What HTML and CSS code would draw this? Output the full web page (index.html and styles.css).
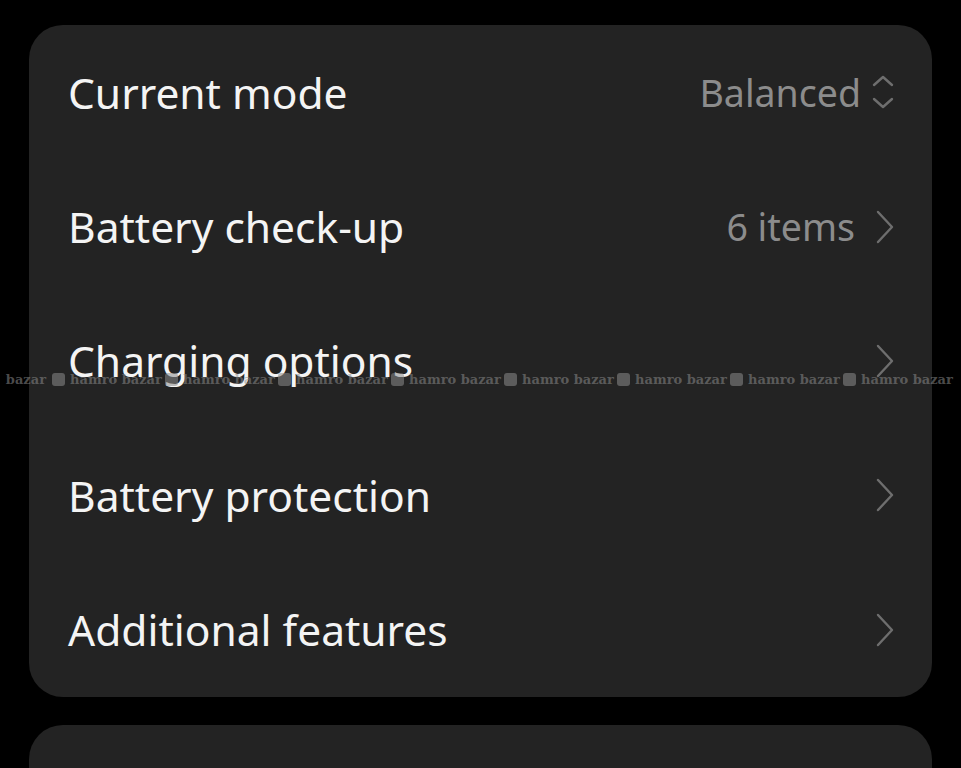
FILE: index.html
```html
<!DOCTYPE html>
<html>
<head>
<meta charset="utf-8">
<link rel="stylesheet" href="styles.css">
</head>
<body>
<div class="page">
  <section class="card">
    <div class="row">
      <span class="label">Current mode</span>
      <span class="value">Balanced
        <svg class="updown" width="22" height="34" viewBox="0 0 22 34"><path d="M2 10 L11 2 L20 10 M2 24 L11 32 L20 24" fill="none" stroke="#6e6e6e" stroke-width="2.4" stroke-linecap="round" stroke-linejoin="round"/></svg>
      </span>
    </div>
    <div class="row">
      <span class="label">Battery check-up</span>
      <span class="value">6 items
        <svg class="chev" width="18" height="34" viewBox="0 0 18 34"><path d="M2 2 L16 17 L2 32" fill="none" stroke="#6e6e6e" stroke-width="2.4" stroke-linecap="round" stroke-linejoin="round"/></svg>
      </span>
    </div>
    <div class="row">
      <span class="label">Charging options</span>
      <span class="value">
        <svg class="chev" width="18" height="34" viewBox="0 0 18 34"><path d="M2 2 L16 17 L2 32" fill="none" stroke="#6e6e6e" stroke-width="2.4" stroke-linecap="round" stroke-linejoin="round"/></svg>
      </span>
    </div>
    <div class="row">
      <span class="label">Battery protection</span>
      <span class="value">
        <svg class="chev" width="18" height="34" viewBox="0 0 18 34"><path d="M2 2 L16 17 L2 32" fill="none" stroke="#6e6e6e" stroke-width="2.4" stroke-linecap="round" stroke-linejoin="round"/></svg>
      </span>
    </div>
    <div class="row">
      <span class="label">Additional features</span>
      <span class="value">
        <svg class="chev" width="18" height="34" viewBox="0 0 18 34"><path d="M2 2 L16 17 L2 32" fill="none" stroke="#6e6e6e" stroke-width="2.4" stroke-linecap="round" stroke-linejoin="round"/></svg>
      </span>
    </div>
  </section>
  <section class="card card-next"></section>
</div>
<div class="watermark">
  <span class="wm-item wm-first">bazar</span>
  <span class="wm-item"><i class="wm-logo"></i>hamro bazar</span>
  <span class="wm-item"><i class="wm-logo"></i>hamro bazar</span>
  <span class="wm-item"><i class="wm-logo"></i>hamro bazar</span>
  <span class="wm-item"><i class="wm-logo"></i>hamro bazar</span>
  <span class="wm-item"><i class="wm-logo"></i>hamro bazar</span>
  <span class="wm-item"><i class="wm-logo"></i>hamro bazar</span>
  <span class="wm-item"><i class="wm-logo"></i>hamro bazar</span>
  <span class="wm-item"><i class="wm-logo"></i>hamro bazar</span>
</div>
</body>
</html>
```
FILE: styles.css
```css
html, body {
  margin: 0;
  padding: 0;
  background: #000;
  height: 768px;
  overflow: hidden;
}
.page {
  padding: 25px 29px 0 29px;
  display: flex;
  flex-direction: column;
  gap: 28px;
  font-family: "Noto Sans", "Open Sans", sans-serif;
}
.card {
  background: #232323;
  border-radius: 34px;
  display: flex;
  flex-direction: column;
}
.card-next {
  height: 44px;
  border-radius: 34px 34px 0 0;
}
.row {
  height: 134.4px;
  display: flex;
  align-items: center;
  justify-content: space-between;
  padding: 0 38px 0 39px;
}
.label {
  color: #f4f4f4;
  font-size: 42.5px;
}
.value {
  color: #8c8c8c;
  font-size: 37.5px;
  display: flex;
  align-items: center;
  gap: 11px;
}
.updown, .chev {
  display: block;
}
.chev {
  margin-left: 10px;
}
.watermark {
  position: absolute;
  left: 0;
  top: 372px;
  width: 961px;
  display: flex;
  white-space: nowrap;
  font-family: "DejaVu Serif", serif;
  font-weight: bold;
  font-size: 13px;
  color: rgba(140, 140, 140, 0.55);
  overflow: hidden;
}
.wm-item {
  display: flex;
  align-items: center;
  width: 113px;
  flex: none;
}
.wm-first {
  width: 46px;
  margin-right: 6px;
  justify-content: flex-end;
}
.wm-logo {
  width: 13px;
  height: 13px;
  border-radius: 3px;
  background: rgba(140, 140, 140, 0.55);
  margin-right: 5px;
}
```
